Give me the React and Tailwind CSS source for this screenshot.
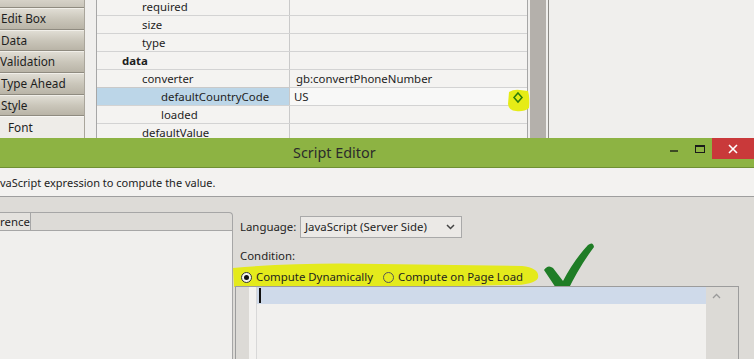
import React from "react";

const sideRows = [
  { label: "Edit Box", pad: "pl-[1px]" },
  { label: "Data", pad: "pl-[1px]" },
  { label: "Validation", pad: "pl-0" },
  { label: "Type Ahead", pad: "pl-[1px]" },
  { label: "Style", pad: "pl-[1px]" },
];

const tableRows = [
  { name: "required", indent: "pl-[45px]", first: true },
  { name: "size", indent: "pl-[45px]" },
  { name: "type", indent: "pl-[45px]" },
  { name: "data", indent: "pl-[25px]", bold: true },
  { name: "converter", indent: "pl-[45px]", value: "gb:convertPhoneNumber" },
  { name: "defaultCountryCode", indent: "pl-[64px]", value: "US", selected: true },
  { name: "loaded", indent: "pl-[64px]" },
  { name: "defaultValue", indent: "pl-[45px]" },
];

export default function App() {
  return (
    <div className="relative w-[754px] h-[359px] overflow-hidden bg-[#f0efed] font-['Noto_Sans',sans-serif] text-[11.4px] text-[#1e1e1e] leading-none">
      {/* top property area */}
      <div className="flex h-[138px] overflow-hidden">
        <div className="w-[85px] flex flex-col border-r border-[#a9a59b] text-[11.8px]">
          <div className="h-[8px] bg-gradient-to-b from-[#d6d2c8] to-[#c9c5ba] border-b border-[#8f8b80]" />
          {sideRows.map((r) => (
            <div
              key={r.label}
              className={`h-[22px] flex items-center ${r.pad} bg-gradient-to-b from-[#e0ddd4] via-[#cac6ba] to-[#b9b4a7] border-t border-[#f1efe9] border-b border-b-[#8f8b80]`}
            >
              {r.label}
            </div>
          ))}
          <div className="h-[22px] flex items-center pl-[8px] bg-[#eeece8] border-t border-[#f8f7f4]">Font</div>
        </div>
        <div className="w-[11px]" />
        <div className="w-[432px] border-l border-r border-[#a6a6a6] bg-[#f4f3f1] overflow-hidden">
          <div className="flex flex-col">
            {tableRows.map((r) => (
              <div
                key={r.name}
                className={`flex ${r.first ? "h-[16px]" : "h-[18px]"} border-b border-[#d3d3d3]`}
              >
                <div
                  className={`w-[193px] flex items-center ${r.indent} ${r.first ? "pb-px" : "pt-px"} border-r border-[#c9c9c9] ${
                    r.selected ? "bg-[#bcd6e8] border-t border-[#9dbcd2] -mt-px" : ""
                  } ${r.bold ? "font-bold" : ""}`}
                >
                  {r.name}
                </div>
                <div className={`flex-1 flex items-center pt-px ${r.selected ? "pl-[4px] bg-[#f8f8f7]" : "pl-[6px]"}`}>
                  {r.value || ""}
                </div>
              </div>
            ))}
          </div>
        </div>
        <div className="w-[2px]" />
        <div className="w-[16px] bg-[#b4b0ab]" />
        <div className="w-[2px]" />
        <div className="w-px bg-[#8c8a86]" />
        <div className="flex-1 bg-[#f0efed]" />
      </div>

      {/* title bar */}
      <div className="relative flex h-[30px] bg-[#8db343] border-b border-[#6f9033]">
        <div className="pl-[293px] pt-[8px] text-[14.4px] text-[#2b2b2b]">Script Editor</div>
        <div className="ml-auto flex h-[21px]">
          <div className="w-[28px] flex items-center justify-center pt-[5px]">
            <div className="w-[8px] h-[2px] bg-[#3d4a24]" />
          </div>
          <div className="w-[24px] flex items-center justify-center">
            <div className="w-[10px] h-[8px] border border-[#1a1a1a] border-t-2" />
          </div>
          <div className="w-[42px] bg-[#c9393a] flex items-center justify-center">
            <svg width="10" height="10" viewBox="0 0 10 10">
              <path d="M1,1 L9,9 M9,1 L1,9" stroke="#fff" strokeWidth="1.6" />
            </svg>
          </div>
        </div>
      </div>

      {/* message */}
      <div className="h-[29px] flex items-center bg-[#f3f2f0] border-b border-[#9e9e9e] text-[#222] text-[11px]">
        vaScript expression to compute the value.
      </div>

      {/* lower */}
      <div className="relative flex h-[162px] bg-[#dddbd7]">
        {/* yellow highlight behind radios */}
        <svg className="absolute left-[230px] top-[62px]" width="320" height="36" viewBox="230 260 320 36">
          <path
            d="M233,269 Q300,263 380,265 L522,267 Q540,269 538,279 Q534,287 505,286 L340,290 Q260,293 234,288 Z"
            fill="#e4ea1c"
          />
        </svg>
        <svg className="absolute left-[540px] top-[43px]" width="58" height="58" viewBox="540 241 58 58">
          <path
            d="M544,271 Q548,265 553,269 L563,282 Q574,261 588,246 Q593,242 594,248 Q579,268 567,293 Q562,298 558,292 Z"
            fill="#1f7d26"
          />
        </svg>

        {/* left tabbed panel */}
        <div className="relative w-[233px] mt-[15px] flex flex-col border-t border-r border-[#a6a6a6] rounded-tr-[4px]">
          <div className="flex h-[18px] border-b border-[#a6a6a6]">
            <div className="w-[31px] flex items-center bg-[#e4e2de] border-r border-[#a6a6a6]">rence</div>
          </div>
          <div className="flex-1 bg-[#f0efed]" />
        </div>

        {/* right */}
        <div className="relative flex-1 flex flex-col pl-[2px]">
          <div className="flex items-center h-[22px] mt-[19px] pl-[5px]">
            <span className="w-[60px]">Language:</span>
            <div className="w-[162px] h-[22px] flex items-center pl-[4px] pr-[6px] bg-[#ebe9e6] border border-[#a9a9a9]">
              <span className="flex-1">JavaScript (Server Side)</span>
              <svg width="9" height="6" viewBox="0 0 9 6">
                <path d="M1,1 L4.5,4.5 L8,1" stroke="#444" strokeWidth="1.5" fill="none" />
              </svg>
            </div>
          </div>
          <div className="h-[14px] mt-[11px] pl-[5px] flex items-center">Condition:</div>
          <div className="h-[18px] mt-[5px] pl-[6px] flex items-center">
            <span className="w-[11px] h-[11px] rounded-full border border-[#333] bg-[#f4f4f0] flex items-center justify-center">
              <span className="w-[5px] h-[5px] rounded-full bg-[#111]" />
            </span>
            <span className="ml-[4px]">Compute Dynamically</span>
            <span className="ml-[10px] w-[11px] h-[11px] rounded-full border border-[#555]" />
            <span className="ml-[4px]">Compute on Page Load</span>
          </div>
          <div className="relative w-[504px] flex-1 flex border border-[#9c9c9c] border-b-0 bg-[#f1f0ee]">
            <div className="w-[13px] bg-[#dcdad6]" />
            <div className="w-[8px] bg-[#f3f2f0] border-r border-[#d8d8d8]" />
            <div className="flex-1">
              <div className="h-[17px] bg-[#cfdaea] flex items-start pl-[2px] pt-[1px]">
                <div className="w-[2px] h-[15px] bg-[#111]" />
              </div>
            </div>
            <div className="w-[32px] bg-[#dcdad6] flex justify-start pl-[6px] pt-[6px]">
              <svg width="9" height="6" viewBox="0 0 9 6">
                <path d="M1,5 L4.5,1.5 L8,5" stroke="#9a9a9a" strokeWidth="1.3" fill="none" />
              </svg>
            </div>
          </div>
        </div>
      </div>

      {/* diamond highlight */}
      <svg className="absolute left-[506px] top-[88px]" width="26" height="26" viewBox="0 0 26 26">
        <path d="M3,4 Q8,1 14,2 L22,3 Q24,10 23,20 Q18,24 10,23 Q3,23 2,16 Z" fill="#e6ec16" />
        <path d="M12,5 L16,9.5 L12,14 L8,9.5 Z" fill="none" stroke="#2d7d0a" strokeWidth="1.5" />
      </svg>
    </div>
  );
}
